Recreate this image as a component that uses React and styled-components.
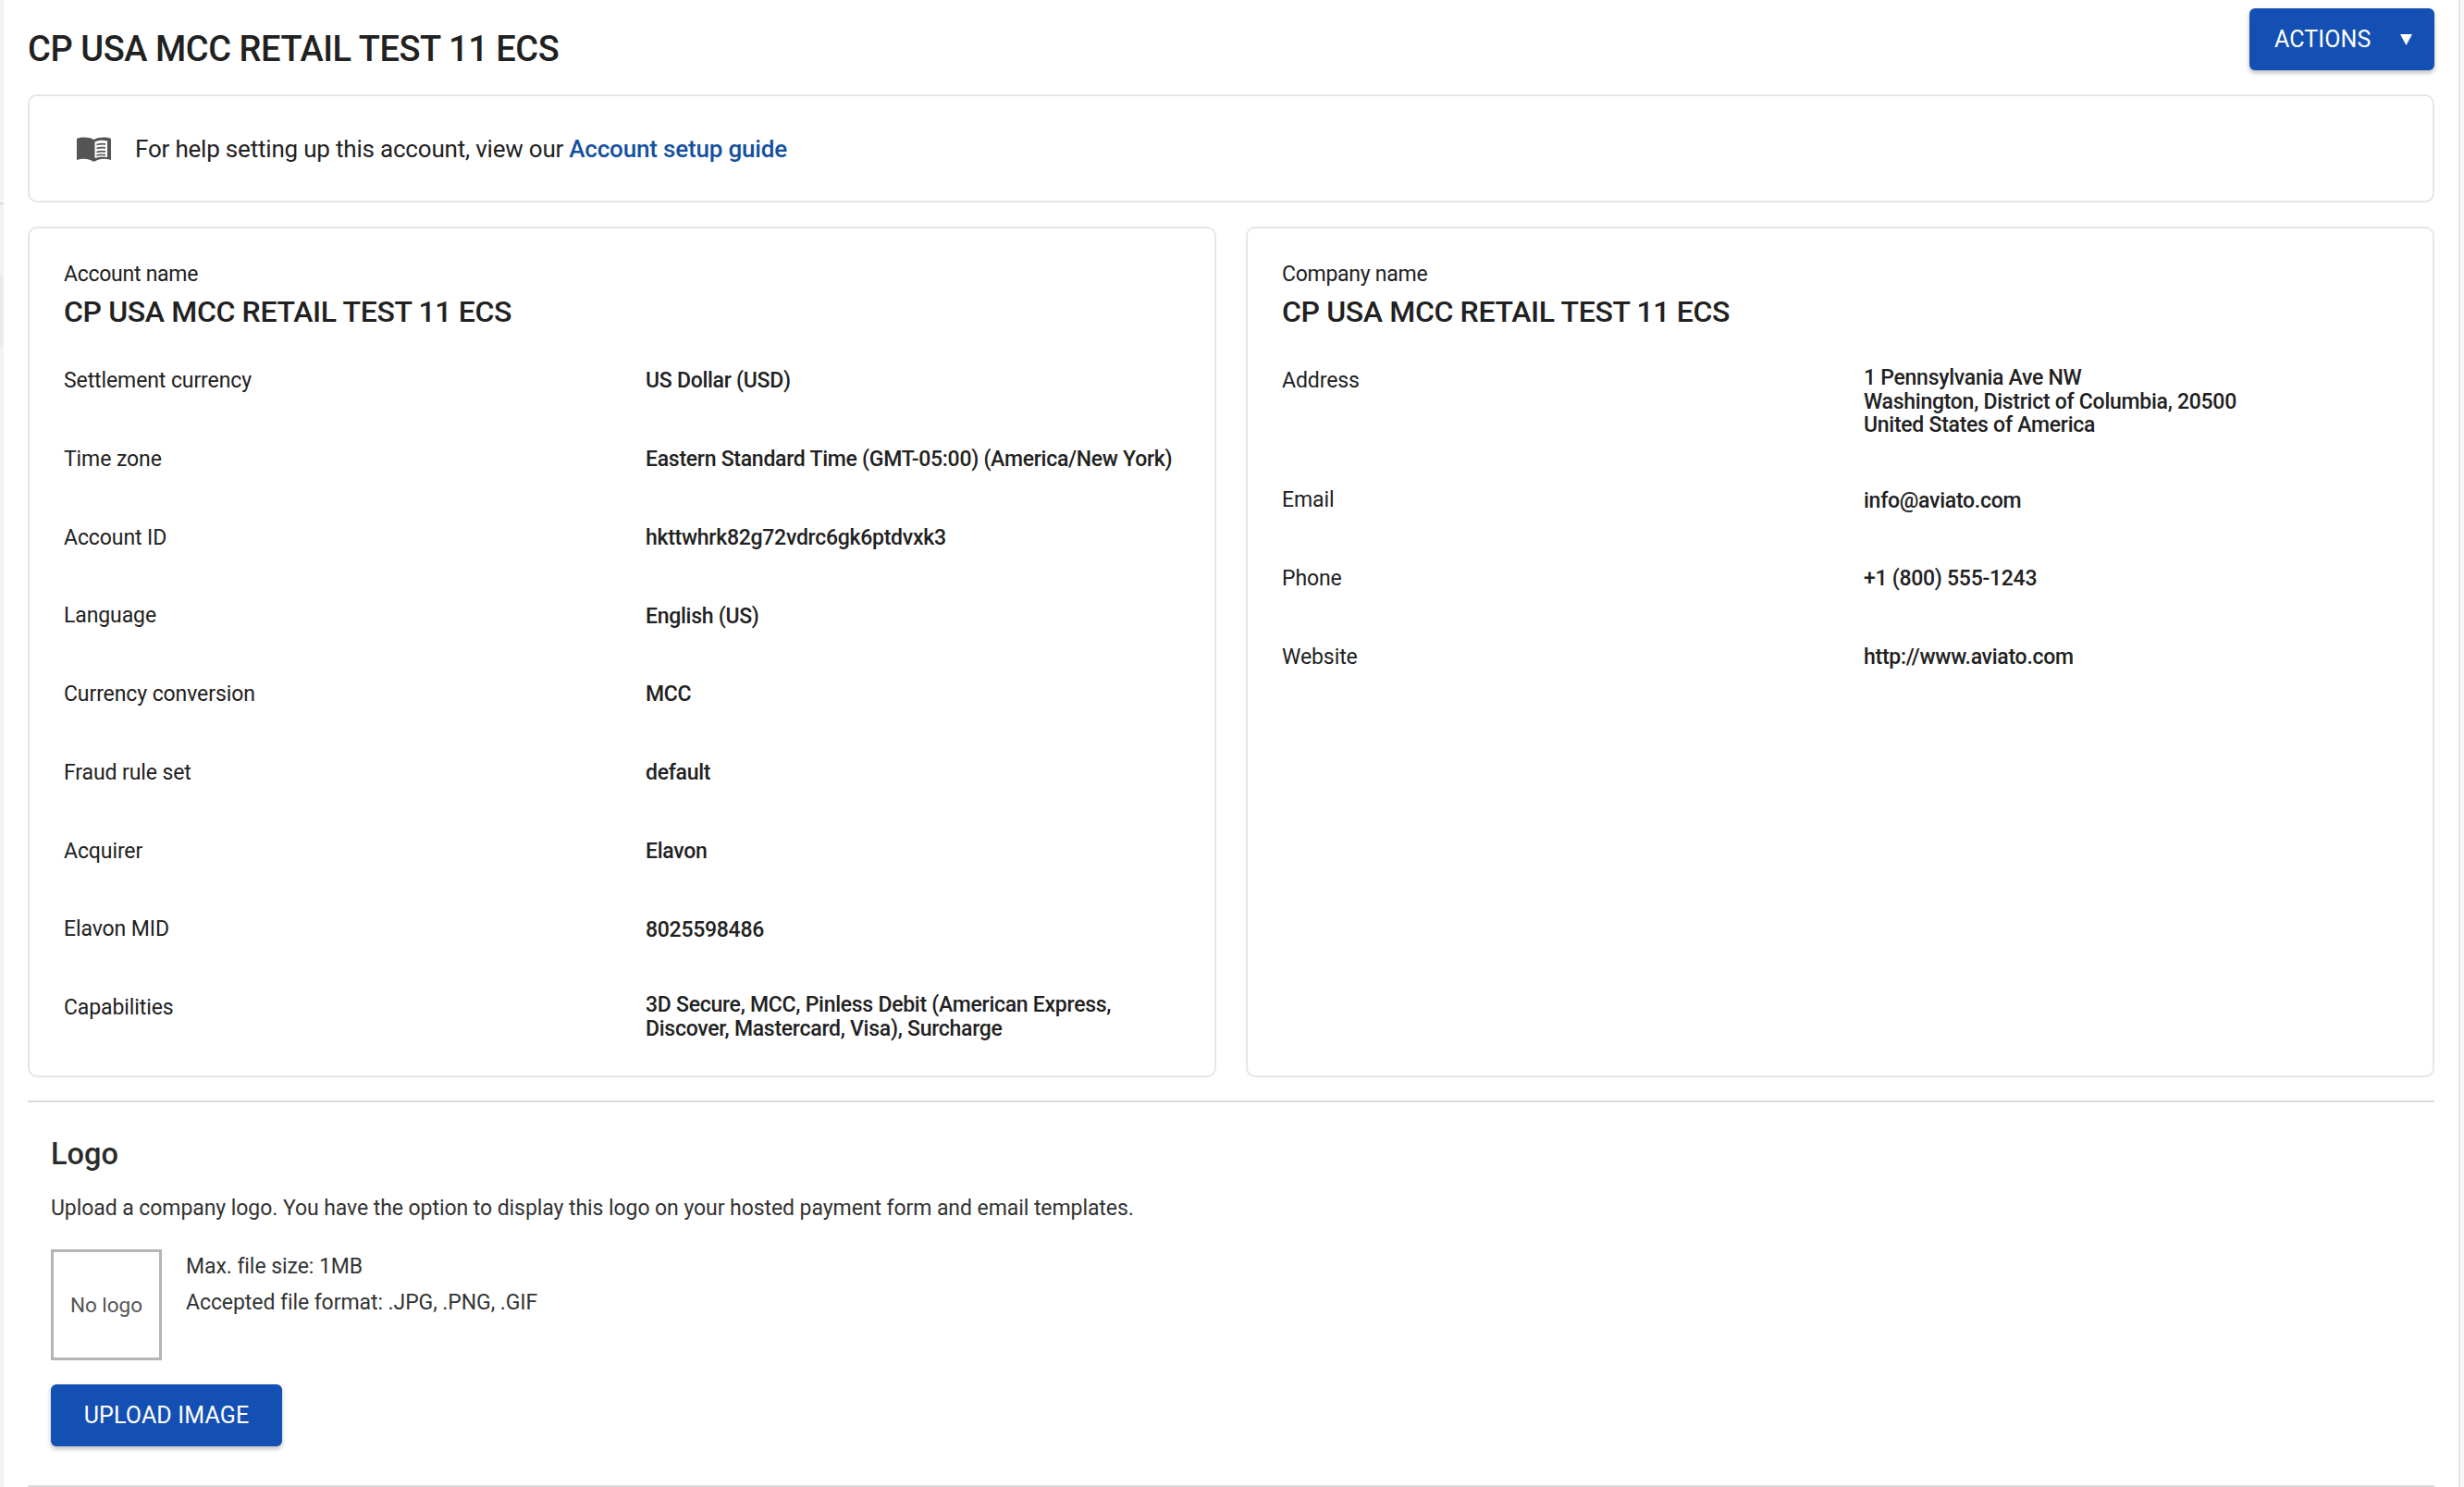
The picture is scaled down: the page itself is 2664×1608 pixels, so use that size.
import React from "react";
import styled, { createGlobalStyle } from "styled-components";

const Global = createGlobalStyle`
  html, body { margin: 0; padding: 0; background: #fff; }
  body { font-family: Roboto, "Liberation Sans", sans-serif; color: #212121; }
  * { box-sizing: border-box; }
`;
const Shell = styled.div`
  width: 2664px; height: 1608px; overflow: hidden; background: #fff;
  display: flex;
`;
const LeftEdge = styled.div`
  width: 4px; background: #f3f3f3; flex: none; display: flex; flex-direction: column;
`;
const EdgeGap = styled.div`height: ${p => p.$h}px; flex: none;`;
const EdgeLine = styled.div`height: 2px; background: #dedede; flex: none;`;
const EdgeBlock = styled.div`height: 78px; background: #ebebeb; flex: none;`;
const RightEdge = styled.div`width: 6px; background: #f8f8f8; border-left: 2px solid #e5e5e5; flex: none;`;
const Main = styled.main`flex: 1; min-width: 0; padding: 9px 26px 0 26px; display: flex; flex-direction: column;`;
const Header = styled.header`flex: none; display: flex; justify-content: space-between; align-items: flex-start; height: 93px;`;
const Title = styled.h1`margin: 22px 0 0; font-size: 38px; line-height: 44px; font-weight: 500; letter-spacing: -0.43px;`;
const Button = styled.button`
  border: 0; border-radius: 6px; background: #1450b4; color: #fff;
  height: 67px; font: 400 25px Roboto, sans-serif; letter-spacing: 0.1px;
  display: inline-flex; align-items: center; flex: none;
  box-shadow: 0 3px 5px rgba(0,0,0,.25);
`;
const ActionsButton = styled(Button)`width: 200px; padding: 0 0 0 27px;`;
const Caret = styled.svg`width: 13px; height: 12px; margin-left: 32px; flex: none;`;
const Panel = styled.section`border: 2px solid #e6e6e6; border-radius: 10px; background: #fff;`;
const Help = styled(Panel)`
  flex: none; height: 117px; display: flex; align-items: center; padding-left: 51px; font-size: 26px;
  margin-bottom: 26px; letter-spacing: -0.2px;
`;
const Book = styled.svg`width: 37px; height: 27px; margin-right: 26px; margin-top: 2px; flex: none;`;
const Link = styled.a`color: #1450a0; font-weight: 500; margin-left: 6px; letter-spacing: -0.18px;`;
const Columns = styled.div`flex: none; display: grid; grid-template-columns: 1fr 1fr; gap: 32px; height: 920px;`;
const Card = styled(Panel)`padding: 36px 20px 0 37px;`;
const Label = styled.div`font-size: 23px; line-height: 28px; letter-spacing: -0.27px;`;
const CardTitle = styled.h2`margin: 6px 0 39px; font-size: 32px; line-height: 40px; font-weight: 500; letter-spacing: -0.35px;`;
const Row = styled.div`
  display: grid; grid-template-columns: 629px 1fr; align-items: start;
  margin-bottom: 52.75px; font-size: 23px;
  &:last-child { margin-bottom: 0; }
`;
const RowLabel = styled.div`line-height: 32px; letter-spacing: -0.1px;`;
const Value = styled.div`
  min-height: 32px; display: flex; align-items: center;
  font-weight: 500; line-height: 25.5px; white-space: pre-line; letter-spacing: -0.27px;
`;
const Rule = styled.hr`flex: none; margin: 0; border: 0; border-top: 2px solid #dcdcdc;`;
const TopRule = styled(Rule)`margin-top: 25px;`;
const LogoSection = styled.section`flex: none; padding: 36px 25px 0; height: 414px;`;
const LogoTitle = styled.h3`margin: 0 0 25px; font-size: 32.5px; line-height: 40px; font-weight: 500; color: #2b2b2b;`;
const Text = styled.p`margin: 0; font-size: 23px; line-height: 28px; color: #333; letter-spacing: -0.07px;`;
const LogoRow = styled.div`display: flex; gap: 26px; margin: 30px 0 26px;`;
const LogoBox = styled.div`
  width: 120px; height: 120px; border: 3px solid #b5b5b5; display: flex; align-items: center; justify-content: center;
  font-size: 22.5px; color: #555; letter-spacing: -0.05px;
`;
const Notes = styled.div`display: flex; flex-direction: column; gap: 11px; padding-top: 5px;`;
const UploadButton = styled(Button)`width: 250px; justify-content: center; letter-spacing: 0.15px;`;

const left = [
  ["Settlement currency", "US Dollar (USD)"],
  ["Time zone", "Eastern Standard Time (GMT-05:00) (America/New York)"],
  ["Account ID", "hkttwhrk82g72vdrc6gk6ptdvxk3"],
  ["Language", "English (US)"],
  ["Currency conversion", "MCC"],
  ["Fraud rule set", "default"],
  ["Acquirer", "Elavon"],
  ["Elavon MID", "8025598486"],
  ["Capabilities", "3D Secure, MCC, Pinless Debit (American Express,\nDiscover, Mastercard, Visa), Surcharge"],
];
const right = [
  ["Address", "1 Pennsylvania Ave NW\nWashington, District of Columbia, 20500\nUnited States of America"],
  ["Email", "info@aviato.com"],
  ["Phone", "+1 (800) 555-1243"],
  ["Website", "http://www.aviato.com"],
];
const name = "CP USA MCC RETAIL TEST 11 ECS";
const InfoCard = ({ label, rows }) => (
  <Card>
    <Label>{label}</Label>
    <CardTitle>{name}</CardTitle>
    {rows.map(([k, v]) => (
      <Row key={k}><RowLabel>{k}</RowLabel><Value>{v}</Value></Row>
    ))}
  </Card>
);

export default function App() {
  return (
    <Shell>
      <Global />
      <LeftEdge>
        <EdgeGap $h={219} />
        <EdgeLine />
        <EdgeGap $h={76} />
        <EdgeBlock />
      </LeftEdge>
      <Main>
        <Header>
          <Title>{name}</Title>
          <ActionsButton>ACTIONS
            <Caret viewBox="0 0 13 12"><path d="M0 0h13L6.5 12z" fill="#fff" /></Caret>
          </ActionsButton>
        </Header>
        <Help>
          <Book viewBox="0 0 37 27">
            <path fill="#555" fillRule="evenodd" d="M0 2C5 0 13 0 18.5 3 24 0 32 0 37 2V25C31 23 24 23 19.8 26.5H17.2C13 23 6 23 0 25ZM19.5 5.5V23C23.5 21.5 29 21 33 22V4.5C29 3.5 23.5 3.5 19.5 5.5Z" />
            <path fill="none" stroke="#555" strokeWidth="1.7" d="M21.5 8.5C24 7.6 28 7.4 31 7.9M21.5 12.5C24 11.6 28 11.4 31 11.9M21.5 16.5C24 15.6 28 15.4 31 15.9M21.5 20.2C24 19.3 28 19.1 31 19.6" />
          </Book>
          For help setting up this account, view our<Link>Account setup guide</Link>
        </Help>
        <Columns>
          <InfoCard label="Account name" rows={left} />
          <InfoCard label="Company name" rows={right} />
        </Columns>
        <TopRule />
        <LogoSection>
          <LogoTitle>Logo</LogoTitle>
          <Text>Upload a company logo. You have the option to display this logo on your hosted payment form and email templates.</Text>
          <LogoRow>
            <LogoBox>No logo</LogoBox>
            <Notes>
              <Text>Max. file size: 1MB</Text>
              <Text>Accepted file format: .JPG, .PNG, .GIF</Text>
            </Notes>
          </LogoRow>
          <UploadButton>UPLOAD IMAGE</UploadButton>
        </LogoSection>
        <Rule />
      </Main>
      <RightEdge />
    </Shell>
  );
}
